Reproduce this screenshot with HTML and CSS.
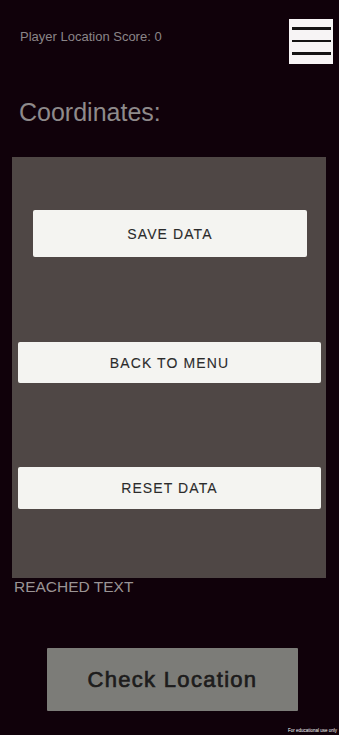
FILE: index.html
```html
<!DOCTYPE html>
<html lang="en">
<head>
    <meta charset="UTF-8">
    <meta name="viewport" content="width=device-width, initial-scale=1.0">
    <title>Location Game</title>
    <link rel="stylesheet" href="styles.css">
</head>
<body>

<div class="screen">
    <div class="top-bar">
        <span class="score">Player Location Score: 0</span>
        <button class="menu-btn" aria-label="Menu">
            <span></span>
            <span></span>
            <span></span>
        </button>
    </div>

    <h1 class="coords">Coordinates:</h1>

    <div class="panel">
        <button class="panel-btn save-btn">SAVE DATA</button>
        <button class="panel-btn back-btn">BACK TO MENU</button>
        <button class="panel-btn reset-btn">RESET DATA</button>
    </div>

    <p class="reached">REACHED TEXT</p>

    <button class="check-btn">Check Location</button>

    <span class="watermark">For educational use only</span>
</div>

</body>
</html>
```

FILE: styles.css
```css
* {
    box-sizing: border-box;
}

body {
    margin: 0;
    padding: 0;
    background-color: #10010a;
    font-family: "Liberation Sans", Arial, sans-serif;
}

.screen {
    position: relative;
    height: 735px;
    overflow: hidden;
}

.top-bar {
    display: flex;
    justify-content: space-between;
    align-items: flex-start;
    padding: 19px 6px 0 20px;
}

.score {
    margin-top: 10px;
    font-size: 13px;
    color: #8a8588;
}

.menu-btn {
    width: 44px;
    height: 45px;
    padding: 8px 2px 0 3px;
    background-color: #f7f4f5;
    border: none;
    display: flex;
    flex-direction: column;
    gap: 10px;
    cursor: pointer;
}

.menu-btn span {
    display: block;
    width: 39px;
    height: 2.5px;
    background-color: #151313;
}

.coords {
    margin: 33px 0 0 19px;
    font-size: 25px;
    font-weight: normal;
    color: #8e8a8b;
    line-height: 30px;
}

.panel {
    margin: 30px 13px 0 12px;
    height: 421px;
    background-color: #4f4745;
    display: flex;
    flex-direction: column;
    padding-top: 53px;
}

.panel-btn {
    border: none;
    border-radius: 2px;
    background-color: #f4f4f1;
    color: #2b2b2b;
    font-family: "Liberation Sans", Arial, sans-serif;
    font-size: 14px;
    letter-spacing: 1.1px;
    -webkit-text-stroke: 0.1px #2b2b2b;
    cursor: pointer;
}

.save-btn {
    margin-left: 21px;
    width: 274px;
    height: 47px;
}

.back-btn {
    margin: 85px 0 0 6px;
    width: 303px;
    height: 41px;
}

.reset-btn {
    margin: 84px 0 0 6px;
    width: 303px;
    height: 42px;
}

.reached {
    margin: 0 0 0 14px;
    font-size: 15.5px;
    line-height: 17px;
    color: #9a9495;
}

.check-btn {
    display: block;
    margin: 53px 0 0 47px;
    width: 251px;
    height: 63px;
    border: none;
    border-radius: 1px;
    background-color: #7c7c78;
    color: #1d1c1c;
    font-family: "Liberation Sans", Arial, sans-serif;
    font-size: 22px;
    font-weight: normal;
    letter-spacing: 1.3px;
    -webkit-text-stroke: 0.7px #1d1c1c;
    cursor: pointer;
}

.watermark {
    position: absolute;
    right: 2px;
    bottom: 2px;
    font-size: 4.5px;
    color: #ffffff;
}
```
